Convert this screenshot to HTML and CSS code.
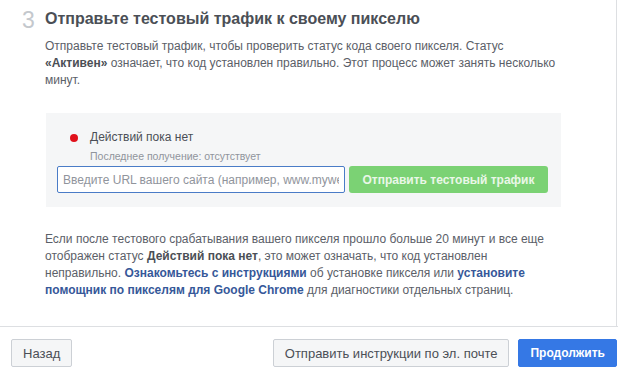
FILE: index.html
```html
<!DOCTYPE html>
<html lang="ru">
<head>
    <meta charset="UTF-8">
    <meta name="viewport" content="width=device-width, initial-scale=1.0">
    <title>Отправьте тестовый трафик</title>
    <link rel="stylesheet" href="styles.css">
</head>
<body>
<div class="content">
    <div class="step">
        <div class="step-num">3</div>
        <div class="step-body">
            <h2 class="step-title">Отправьте тестовый трафик к своему пикселю</h2>
            <p class="text">Отправьте тестовый трафик, чтобы проверить статус кода своего пикселя. Статус <b>«Активен»</b> означает, что код установлен правильно. Этот процесс может занять несколько минут.</p>

            <div class="test-box">
                <div class="status">
                    <span class="dot"></span>
                    <div>
                        <div class="status-title">Действий пока нет</div>
                        <div class="status-sub">Последнее получение: отсутствует</div>
                    </div>
                </div>
                <div class="test-row">
                    <input type="text" class="url-input" placeholder="Введите URL вашего сайта (например, www.mywebsite.com)">
                    <button class="btn-green" disabled>Отправить тестовый трафик</button>
                </div>
            </div>

            <p class="text note">Если после тестового срабатывания вашего пикселя прошло больше 20 минут и все еще отображен статус <b>Действий пока нет</b>, это может означать, что код установлен неправильно. <a href="#">Ознакомьтесь с инструкциями</a> об установке пикселя или <a href="#">установите помощник по пикселям для Google Chrome</a> для диагностики отдельных страниц.</p>
        </div>
    </div>
</div>

<div class="footer">
    <button class="btn">Назад</button>
    <div class="footer-right">
        <button class="btn">Отправить инструкции по эл. почте</button>
        <button class="btn btn-blue">Продолжить</button>
    </div>
</div>
</body>
</html>
```

FILE: styles.css
```css
body {
    font-family: "Liberation Sans", Arial, sans-serif;
    margin: 0;
    padding: 0;
    background: #fff;
    color: #4b4f56;
}
.content {
    width: 617px;
    height: 326px;
    border-right: 1px solid #dddfe2;
    box-sizing: border-box;
    overflow: hidden;
}
.step {
    display: flex;
    padding: 8px 0 0 22px;
}
.step-num {
    width: 23px;
    font-size: 23px;
    line-height: 24px;
    color: #c4c8cd;
    font-weight: 300;
}
.step-body {
    width: 516px;
}
.step-title {
    margin: 1px 0 0;
    font-size: 16px;
    line-height: 20px;
    color: #4b4f56;
}
.text {
    margin: 9px 0 0;
    font-size: 12px;
    line-height: 17px;
    color: #5b6068;
}
.text b {
    color: #4b4f56;
}
.test-box {
    margin: 24px 0 0 1px;
    background: #f5f6f7;
    padding: 16px 13px 14px 11px;
}
.status {
    display: flex;
    align-items: flex-start;
    padding-left: 13px;
}
.dot {
    width: 8px;
    height: 8px;
    border-radius: 50%;
    background: #e0111b;
    margin: 5px 12px 0 0;
}
.status-title {
    font-size: 12px;
    line-height: 16px;
    color: #4b4f56;
}
.status-sub {
    font-size: 10.5px;
    line-height: 14px;
    margin-top: 4px;
    color: #90949c;
}
.test-row {
    display: flex;
    gap: 4px;
    margin-top: 3px;
}
.url-input {
    width: 288px;
    height: 27px;
    box-sizing: border-box;
    border: 1px solid #4a7cc7;
    border-radius: 2px;
    padding: 0 5px;
    font-family: inherit;
    font-size: 12px;
    color: #4b4f56;
    background: #fff;
    outline: none;
}
.url-input::placeholder {
    color: #90949c;
}
.btn-green {
    width: 199px;
    height: 27px;
    border: none;
    border-radius: 3px;
    background: #7bd274;
    color: #eaf7e8;
    font-family: inherit;
    font-size: 12px;
    font-weight: bold;
}
.note {
    margin-top: 24px;
}
.note a {
    color: #365899;
    font-weight: bold;
    text-decoration: none;
}
.footer {
    border-top: 1px solid #dddfe2;
    display: flex;
    justify-content: space-between;
    align-items: center;
    padding: 12px 1px 0 11px;
}
.footer-right {
    display: flex;
    gap: 9px;
}
.btn {
    height: 28px;
    padding: 0 11px;
    background: #f5f6f7;
    border: 1px solid #ccd0d5;
    border-radius: 2px;
    color: #4b4f56;
    font-family: inherit;
    font-size: 13px;
    cursor: pointer;
}
.btn-blue {
    background: #3578e5;
    border-color: #3578e5;
    color: #fff;
    font-size: 12px;
    font-weight: bold;
    padding: 0 11px;
}
```
